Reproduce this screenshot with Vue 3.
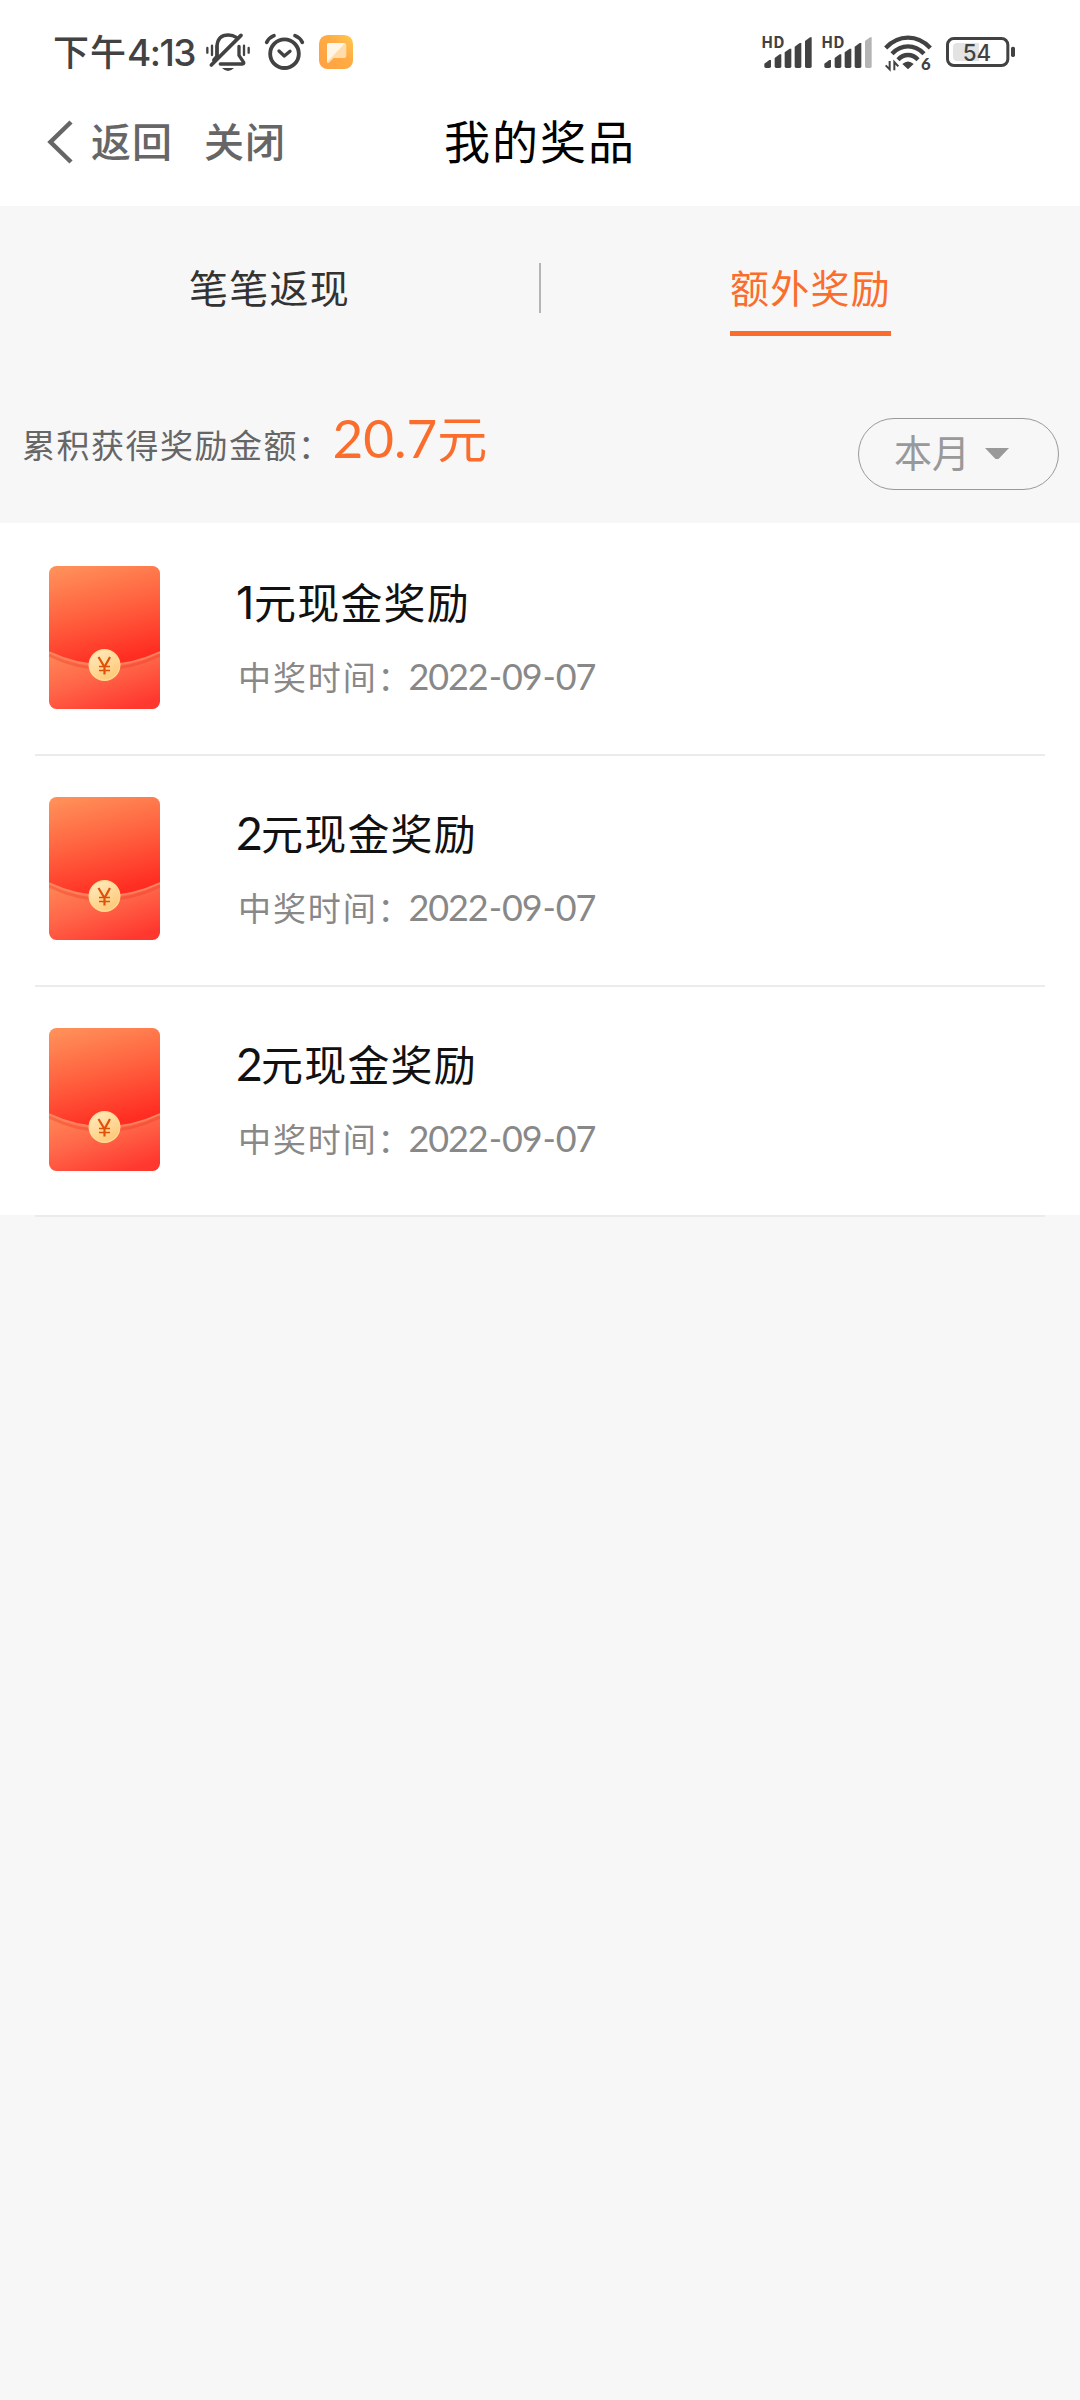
<script setup>
const prizes = [
  { id: 1, amount: 1, year: '2022', month: '09', day: '07' },
  { id: 2, amount: 2, year: '2022', month: '09', day: '07' },
  { id: 3, amount: 2, year: '2022', month: '09', day: '07' }
]
const bars = [
  { x: 44, y: 120 },
  { x: 75, y: 103 },
  { x: 105, y: 86 },
  { x: 135, y: 69 },
  { x: 166, y: 52 }
]
</script>

<template>
  <div class="page">
    <header class="top">
      <div class="status">
        <div class="status-left">
          <span class="clock">下午<span class="clock-num">4:13</span></span>
          <svg class="bell" width="46" height="70" viewBox="495 0 138 210" fill="none" stroke="#424242" stroke-width="9" stroke-linecap="round">
            <path d="M531 107V78Q533 45 565 45Q579 45 589 52" stroke-width="10" />
            <path d="M531 78V108L521 120" stroke-width="10" />
            <path d="M597 79V106L611 127Q613 132 607 132H541" stroke-width="10" stroke-linejoin="round" />
            <path d="M514 135L603 46" stroke-width="11" />
            <path d="M502 84V98M516 77V105M612 77V105M626 84V98" stroke-width="7" />
            <path d="M546 144H582Q564 162 546 144Z" fill="#424242" stroke="none" />
          </svg>
          <svg class="alarm" width="41" height="70" viewBox="672 0 123 210" fill="none" stroke="#424242" stroke-linecap="round">
            <circle cx="733.500" cy="101" r="43" stroke-width="11.500" />
            <path d="M680 67Q687 53 702 47M787 67Q780 53 765 47" stroke-width="11" />
            <path d="M717 93L733 108L750 94" stroke-width="10" stroke-linejoin="round" />
          </svg>
          <svg width="34" height="70" viewBox="837 0 102 210">
            <defs>
              <linearGradient id="note-tile" x1="0" y1="1" x2="1" y2="0">
                <stop offset="0" stop-color="#ffa044" /><stop offset=".6" stop-color="#ffac43" /><stop offset="1" stop-color="#ffc94f" />
              </linearGradient>
            </defs>
            <rect x="837" y="45" width="102" height="102" rx="26" fill="url(#note-tile)" />
            <path d="M866 69H913Q919 69 919 75V108Q919 114 913 114H881L867 128Q861 132 861 125V74Q861 69 866 69Z" fill="#ffdca9" />
            <path d="M866 69H916L861 126V74Q861 69 866 69Z" fill="#fff6e7" />
          </svg>
        </div>
        <div class="status-right">
          <svg v-for="n in 2" :key="n" class="signal" width="51" height="70" viewBox="36 0 153 210" fill="#424242">
            <text class="hd" x="34" y="84">HD</text>
            <path
              v-for="(b, i) in bars"
              :key="i"
              :d="`M${b.x - 1} ${b.y + 11}L${b.x + 14} ${b.y}H${b.x + 19}V139Q${b.x + 19} 144 ${b.x + 14} 144H${b.x + 4}Q${b.x - 1} 144 ${b.x - 1} 139Z`"
              :fill="n === 2 && i === 4 ? '#b4b4b4' : '#424242'"
            />
          </svg>
          <svg class="wifi" width="48" height="70" viewBox="402 0 144 210" fill="none" stroke="#424242">
            <path d="M407 84Q436 53 474 53Q512 53 541 84" stroke-width="13" />
            <path d="M426 101Q447 79 474 79Q501 79 522 101" stroke-width="13" />
            <path d="M444 119Q457 105 474 105Q491 105 504 119" stroke-width="13" />
            <path d="M457 132Q474 117 491 132L474 148Z" fill="#424242" stroke="none" />
            <path d="M419 123V148L407 136M433 151V126L445 139" stroke-width="6" />
            <text class="six" x="513" y="151">6</text>
          </svg>
          <svg width="70" height="70" viewBox="588 0 210 210">
            <rect x="592.500" y="55.500" width="181" height="81" rx="19" fill="none" stroke="#424242" stroke-width="9" />
            <path d="M622 69H687V123H622Q609 123 609 110V82Q609 69 622 69Z" fill="#e3e3e3" />
            <rect x="783" y="80" width="12" height="31" rx="5" fill="#424242" />
            <text class="level" x="681" y="123" text-anchor="middle">54</text>
          </svg>
        </div>
      </div>
      <nav class="nav">
        <div class="nav-side">
          <svg width="28" height="46" viewBox="0 0 28 46" fill="none" stroke="#666" stroke-width="4.500"><path d="M26 3L5.500 23L26 43" /></svg>
          <span class="back">返回</span>
          <span class="close">关闭</span>
        </div>
        <h1>我的奖品</h1>
        <div class="nav-side"></div>
      </nav>
    </header>

    <section class="tabs">
      <div class="tab"><span>笔笔返现</span></div>
      <div class="split"></div>
      <div class="tab active"><span>额外奖励</span></div>
    </section>

    <section class="summary">
      <p>累积获得奖励金额：<span class="sum"><span class="sum-num">20.7</span>元</span></p>
      <button class="month">
        <span>本月</span>
        <svg width="24" height="12" viewBox="0 0 24 12"><path d="M0 0H24L13.500 11H10.500Z" fill="#999" /></svg>
      </button>
    </section>

    <main class="list">
      <article v-for="p in prizes" :key="p.id" class="prize">
        <svg class="packet" width="111" height="143" viewBox="0 0 111 143">
          <defs>
            <linearGradient :id="`flap${p.id}`" x1=".2" y1="0" x2=".48" y2="1">
              <stop offset="0" stop-color="#ff8f59" /><stop offset=".5" stop-color="#ff603e" /><stop offset="1" stop-color="#ff2c22" />
            </linearGradient>
            <linearGradient :id="`pocket${p.id}`" x1=".1" y1="0" x2=".7" y2="1">
              <stop offset="0" stop-color="#ff8a58" /><stop offset=".5" stop-color="#ff6649" /><stop offset="1" stop-color="#ff382f" />
            </linearGradient>
            <linearGradient :id="`coin${p.id}`" x1=".2" y1="0" x2=".8" y2="1">
              <stop offset="0" stop-color="#ffebbd" /><stop offset="1" stop-color="#ffc673" />
            </linearGradient>
            <clipPath :id="`card${p.id}`"><rect width="111" height="143" rx="7.500" /></clipPath>
          </defs>
          <g :clip-path="`url(#card${p.id})`">
            <rect y="80" width="111" height="63" :fill="`url(#pocket${p.id})`" />
            <path d="M0 89Q55.500 116 111 89" fill="none" stroke="#e93a26" stroke-opacity=".35" stroke-width="3" />
            <path d="M0 0H111V86Q55.500 112 0 86Z" :fill="`url(#flap${p.id})`" />
            <path d="M0 86Q55.500 112 111 86" fill="none" stroke="#ff8060" stroke-width="1.800" />
          </g>
          <circle cx="55.500" cy="99" r="15.300" :fill="`url(#coin${p.id})`" stroke="#ffdc91" stroke-width="1.300" />
          <path d="M49.500 91L55.500 101L61 91M55.500 101V108.500" fill="none" stroke="#df5109" stroke-width="2.200" />
          <path d="M50 100.500H61M50 104.500H61" fill="none" stroke="#df5109" stroke-width="1.400" />
        </svg>
        <div class="info">
          <h2><span class="count" :class="{ one: p.amount === 1 }">{{ p.amount }}</span>元现金奖励</h2>
          <p>中奖时间：<span class="date">{{ p.year }}<i>-</i>{{ p.month }}<i>-</i>{{ p.day }}</span></p>
        </div>
      </article>
    </main>
  </div>
</template>

<style>
body {
  margin: 0;
  background: #f7f7f7;
}
</style>

<style scoped>
.page {
  width: 1080px;
  height: 2400px;
  overflow: hidden;
  background: #f7f7f7;
  font-family: "Noto Sans CJK SC", sans-serif;
  font-weight: 400;
}
h1, h2, p {
  margin: 0;
  font-weight: 400;
  white-space: nowrap;
}
svg {
  display: block;
  flex: none;
}
.top {
  height: 206px;
  box-sizing: border-box;
  padding-top: 20px;
  background: #fff;
}
.status {
  display: flex;
  justify-content: space-between;
  height: 70px;
  padding: 0 64px 0 53px;
}
.status-left,
.status-right {
  display: flex;
}
.clock {
  width: 152px;
  color: #424242;
  font-size: 36px;
  font-weight: 500;
  line-height: 60px;
  letter-spacing: 1px;
  white-space: nowrap;
}
.clock-num {
  font-family: Inter, sans-serif;
  font-size: 37px;
  line-height: 0;
  letter-spacing: -1.500px;
}
.alarm {
  margin: 0 14px 0 13px;
}
.signal {
  margin-right: 9px;
}
.wifi {
  margin: 0 14px 0 2px;
}
.hd {
  font: 700 47px "Noto Sans CJK SC", sans-serif;
}
.six {
  font: 900 50px Lato, sans-serif;
  fill: #424242;
  stroke: none;
}
.level {
  font: 500 67px Inter, sans-serif;
  fill: #424242;
}
.nav {
  display: flex;
  align-items: center;
  height: 100px;
}
.nav-side {
  display: flex;
  flex: 1;
  align-items: center;
  padding-left: 45px;
  color: #666;
  font-size: 40px;
  font-weight: 500;
  line-height: 60px;
  letter-spacing: 1px;
}
.nav-side:last-child {
  padding: 0 45px 0 0;
}
.nav-side svg {
  margin-top: 4px;
}
.back {
  margin-left: 18px;
}
.close {
  margin-left: 31px;
}
.nav h1 {
  font-size: 46px;
  line-height: 60px;
  letter-spacing: 2px;
  margin-bottom: 2px;
  color: #000;
}
.tabs {
  display: flex;
  height: 162px;
  padding-top: 50px;
  box-sizing: border-box;
}
.tab {
  display: flex;
  flex: 1;
  justify-content: center;
  align-items: flex-start;
  color: #333;
  font-size: 39px;
  line-height: 60px;
  letter-spacing: 1.250px;
}
.tab span {
  padding-bottom: 15px;
  border-bottom: 5px solid transparent;
}
.tab.active {
  color: #fa6d2d;
}
.tab.active span {
  border-color: #fa6d2d;
}
.split {
  width: 2px;
  height: 50px;
  margin-top: 7px;
  background: #b5b5b5;
}
.summary {
  display: flex;
  justify-content: space-between;
  align-items: flex-start;
  height: 155px;
  box-sizing: border-box;
  padding: 46px 21px 0 22px;
}
.summary p {
  color: #666;
  font-size: 33px;
  line-height: 60px;
  letter-spacing: 1.500px;
}
.sum {
  color: #fa6d2d;
  font-size: 50px;
  line-height: 0;
}
.sum-num {
  font-family: Lato, sans-serif;
  font-size: 53px;
  letter-spacing: 0;
}
.month {
  display: flex;
  align-items: center;
  width: 201px;
  height: 72px;
  box-sizing: border-box;
  margin: 4px 0 0;
  padding: 0 0 0 36px;
  border: 1px solid #999;
  border-radius: 36px;
  background: transparent;
  color: #999;
  font-family: inherit;
  font-size: 38px;
  line-height: 60px;
}
.month span {
  margin: -6px 0 0 -1px;
}
.month svg {
  margin-left: 15px;
}
.list {
  height: 692px;
  background: #fff;
}
.prize {
  display: flex;
  height: 230.750px;
  box-sizing: border-box;
  margin: 0 35px;
  padding: 43px 0 0 14px;
  position: relative;
}
.prize::after {
  content: "";
  position: absolute;
  left: 0;
  right: 0;
  bottom: -2px;
  height: 2px;
  background: #ebebeb;
}
.info {
  margin: 5px 0 0 76px;
}
.info h2 {
  color: #111;
  font-size: 42px;
  line-height: 60px;
  letter-spacing: 1.200px;
}
.count {
  display: inline-block;
  width: 25px;
  font-family: Lato, sans-serif;
  font-size: 46px;
  line-height: 0;
  letter-spacing: 0;
}
.count.one {
  width: 18px;
  font-family: Inter, sans-serif;
  font-size: 45px;
}
.info p {
  margin: 20px 0 0 2px;
  color: #888;
  font-size: 33px;
  line-height: 50px;
  letter-spacing: 1.900px;
}
.date {
  margin-left: -4px;
  font-family: Lato, sans-serif;
  font-size: 36px;
  line-height: 0;
  letter-spacing: -1.100px;
}
.date i {
  font-style: normal;
  margin: 0 1px;
}
</style>
